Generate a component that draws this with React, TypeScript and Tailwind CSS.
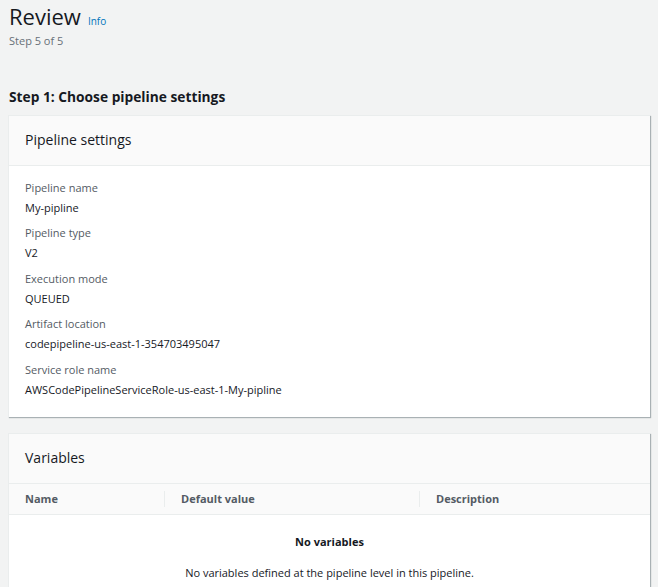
import React from "react";

const rows: [string, string][] = [
  ["Pipeline name", "My-pipline"],
  ["Pipeline type", "V2"],
  ["Execution mode", "QUEUED"],
  ["Artifact location", "codepipeline-us-east-1-354703495047"],
  ["Service role name", "AWSCodePipelineServiceRole-us-east-1-My-pipline"],
];

export default function App() {
  return (
    <div
      className="w-[658px] h-[587px] overflow-hidden bg-[#f2f3f3] text-[#16191f]"
      style={{ fontFamily: '"Open Sans", "Noto Sans", sans-serif' }}
    >
      <div className="pl-[9px] pt-[2px]">
        <div className="flex items-baseline">
          <h1 className="text-[22px] leading-[29px] font-normal text-[#16191f]">Review</h1>
          <span className="ml-[7px] text-[10px] text-[#0073bb]">Info</span>
        </div>
        <div className="text-[11px] leading-[16px] mt-[2px] text-[#687078]">Step 5 of 5</div>
      </div>
      <h2 className="pl-[9px] mt-[39px] text-[13.75px] leading-[18px] font-bold text-[#16191f]">
        Step 1: Choose pipeline settings
      </h2>
      <div className="ml-[8px] mt-[9px] w-[642px] bg-white border-t border-l border-[#eaeded] shadow-[1px_1px_1px_0_rgba(0,28,36,0.3)]">
        <div className="h-[50px] bg-[#fafafa] border-b border-[#eaeded] pl-[16px] pt-[11px]">
          <span className="text-[14px] leading-[18px]">Pipeline settings</span>
        </div>
        <div className="pl-[16px] pt-[14px] pb-[10px] flex flex-col">
          {rows.map(([k, v]) => (
            <div key={k} className="flex flex-col h-[45.4px]">
              <div className="text-[11px] leading-[16px] text-[#545b64]">{k}</div>
              <div className="text-[11px] leading-[16px] mt-[4px] text-[#16191f]">{v}</div>
            </div>
          ))}
        </div>
      </div>
      <div className="ml-[8px] mt-[16px] w-[642px] bg-white border-t border-l border-[#eaeded] shadow-[1px_1px_1px_0_rgba(0,28,36,0.3)]">
        <div className="h-[50px] bg-[#fafafa] border-b border-[#eaeded] pl-[16px] pt-[11px]">
          <span className="text-[14px] leading-[18px]">Variables</span>
        </div>
        <div className="h-[31px] bg-[#fafafa] border-b border-[#eaeded] grid grid-cols-[155px_255px_1fr] items-center text-[11px] font-bold text-[#545b64]">
          <div className="pl-[16px]">Name</div>
          <div className="pl-[16px] border-l border-[#eaeded] leading-[16px]">Default value</div>
          <div className="pl-[16px] border-l border-[#eaeded] leading-[16px]">Description</div>
        </div>
        <div className="flex flex-col items-center pt-[19px] pb-[20px]">
          <div className="text-[11px] leading-[16px] font-bold text-[#16191f]">No variables</div>
          <div className="text-[11px] leading-[16px] mt-[15px] text-[#16191f]">
            No variables defined at the pipeline level in this pipeline.
          </div>
        </div>
      </div>
    </div>
  );
}
